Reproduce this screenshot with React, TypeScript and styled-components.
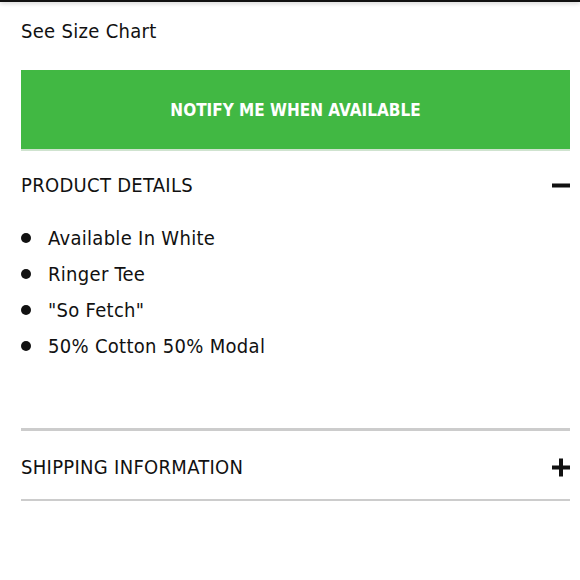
import React from "react";
import styled, { createGlobalStyle } from "styled-components";

const GlobalStyle = createGlobalStyle`
  body {
    margin: 0;
    background: #fff;
    font-family: "DejaVu Sans Condensed", "DejaVu Sans", sans-serif;
    color: #111;
  }
`;

const TopEdge = styled.div`
  height: 2px;
  background: #111;
  box-shadow: 0 1px 4px rgba(0, 0, 0, 0.3);
`;

const Root = styled.div`
  padding: 0 10px 0 21px;
`;

const SizeChart = styled.a`
  display: block;
  margin-top: 15px;
  font-size: 20px;
  line-height: 28px;
  letter-spacing: 0.3px;
  color: #111;
  text-decoration: none;
`;

const NotifyButton = styled.button`
  display: block;
  width: 100%;
  height: 79px;
  margin-top: 25px;
  border: none;
  background: #41b843;
  box-shadow: 0 2px 0 #cfe3cf;
  color: #fff;
  font-family: inherit;
  font-weight: bold;
  font-size: 17px;
  letter-spacing: 0;
  text-transform: uppercase;
`;

const SectionHeader = styled.div<{ $top: number }>`
  display: flex;
  align-items: center;
  justify-content: space-between;
  padding-top: ${(p) => p.$top}px;
  font-size: 20px;
  line-height: 28px;
  letter-spacing: 0.3px;
  text-transform: uppercase;
`;

const Toggle = styled.svg`
  width: 19px;
  height: 19px;
  flex-shrink: 0;
`;

const List = styled.ul`
  list-style: none;
  margin: 21px 0 0;
  padding: 0;
`;

const Item = styled.li`
  display: flex;
  align-items: center;
  gap: 17px;
  height: 36px;
  font-size: 20px;
  letter-spacing: 0.3px;

  &::before {
    content: "";
    width: 10px;
    height: 10px;
    border-radius: 50%;
    background: #111;
    flex-shrink: 0;
  }
`;

const Divider = styled.hr<{ $thick: number }>`
  margin: 0;
  border: none;
  height: ${(p) => p.$thick}px;
  background: #cccccc;
`;

const Spacer = styled.div<{ $h: number }>`
  height: ${(p) => p.$h}px;
`;

const items = ["Available In White", "Ringer Tee", '"So Fetch"', "50% Cotton 50% Modal"];

const Minus = () => (
  <Toggle viewBox="0 0 19 19">
    <rect x="1" y="7.5" width="18" height="4" fill="#111" />
  </Toggle>
);

const Plus = () => (
  <Toggle viewBox="0 0 19 19">
    <rect x="1" y="7.5" width="18" height="4" fill="#111" />
    <rect x="8" y="0.5" width="4" height="18" fill="#111" />
  </Toggle>
);

export default function App() {
  return (
    <>
      <GlobalStyle />
      <TopEdge />
      <Root>
        <SizeChart href="#">See Size Chart</SizeChart>
        <NotifyButton>Notify me when available</NotifyButton>
        <SectionHeader $top={22}>
          <span>Product Details</span>
          <Minus />
        </SectionHeader>
        <List>
          {items.map((t) => (
            <Item key={t}>{t}</Item>
          ))}
        </List>
        <Spacer $h={64} />
        <Divider $thick={3} />
        <SectionHeader $top={22}>
          <span>Shipping Information</span>
          <Plus />
        </SectionHeader>
        <Spacer $h={18} />
        <Divider $thick={2} />
      </Root>
    </>
  );
}
